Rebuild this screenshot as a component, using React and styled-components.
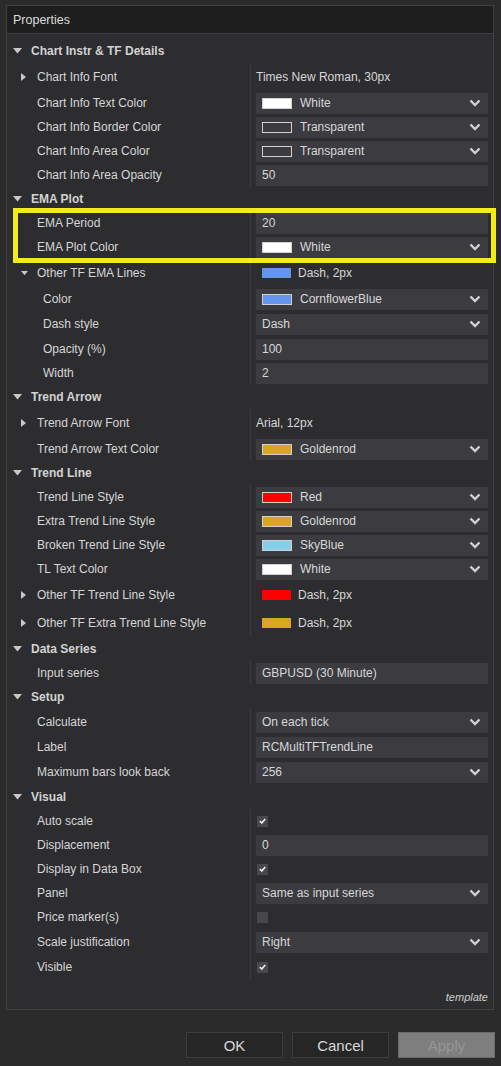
import React from "react";
import styled, { createGlobalStyle } from "styled-components";

const GlobalStyle = createGlobalStyle`
  html, body {
    margin: 0;
    padding: 0;
    background: #2b2b2b;
  }
  body {
    font-family: "Liberation Sans", Arial, sans-serif;
    font-size: 12px;
    color: #d6d6d6;
  }
`;

const Window = styled.div`
  width: 501px;
  height: 1066px;
  box-sizing: border-box;
  padding: 5px 7px 0 6px;
  display: flex;
  flex-direction: column;
`;

const Panel = styled.div`
  height: 1005px;
  box-sizing: border-box;
  border: 1px solid #404043;
  background: #2d2d30;
  display: flex;
  flex-direction: column;
`;

const Header = styled.div`
  height: 27px;
  flex-shrink: 0;
  background: #1e1e1f;
  border-bottom: 1px solid #404043;
  display: flex;
  align-items: center;
  padding-left: 6px;
  font-size: 12.5px;
  color: #dcdcdc;
`;

const List = styled.div`
  padding-top: 5px;
  display: flex;
  flex-direction: column;
`;

const Row = styled.div`
  height: ${(p) => p.h || 24}px;
  display: grid;
  grid-template-columns: 243px 1fr;
  align-items: stretch;
`;

const NameCell = styled.div`
  display: flex;
  align-items: center;
  padding-left: ${(p) => p.indent}px;
  font-weight: ${(p) => (p.category ? 700 : 400)};
  color: ${(p) => (p.category ? "#d2d2d2" : "#d6d6d6")};
  white-space: nowrap;
`;

const Toggle = styled.span`
  width: ${(p) => p.w}px;
  flex-shrink: 0;
  display: flex;
  align-items: center;
`;

const ValueCell = styled.div`
  border-left: ${(p) => (p.category ? "none" : "1px solid #39393c")};
  padding: 0 5px 0 5px;
  display: flex;
  align-items: center;
`;

const Field = styled.div`
  flex: 1;
  height: 21px;
  background: #3c3c40;
  display: flex;
  align-items: center;
  padding: 0 7px 0 6px;
  gap: 8px;
  color: #d8d8d8;
`;

const PlainValue = styled.div`
  flex: 1;
  display: flex;
  align-items: center;
  gap: 7px;
  padding-left: ${(p) => (p.swatch ? 6 : 0)}px;
  color: #d8d8d8;
`;

const Swatch = styled.span`
  width: ${(p) => (p.bare ? 29 : 28)}px;
  height: ${(p) => (p.bare ? 10 : 9)}px;
  flex-shrink: 0;
  background: ${(p) => p.color};
  border: ${(p) => (p.bare ? "none" : "1px solid #d0d0d0")};
`;

const FieldText = styled.span`
  flex: 1;
`;

const Check = styled.span`
  width: 11px;
  height: 11px;
  background: #48484c;
  display: flex;
  align-items: center;
  justify-content: center;
  margin-left: 1px;
`;

const Highlight = styled.div`
  position: relative;
  display: flex;
  flex-direction: column;
  &::after {
    content: "";
    position: absolute;
    left: 6px;
    right: -3px;
    top: -3px;
    bottom: -4px;
    border: 5px solid #f3ec1a;
    pointer-events: none;
  }
`;

const Footer = styled.div`
  height: 31px;
  display: flex;
  align-items: center;
  justify-content: flex-end;
  padding: 6px 5px 0 0;
  box-sizing: border-box;
  font-style: italic;
  font-size: 11px;
  color: #cfcfcf;
`;

const ButtonBar = styled.div`
  display: flex;
  justify-content: flex-end;
  gap: 9px;
  margin-top: 22px;
  margin-right: -1px;
`;

const Button = styled.div`
  width: 97px;
  height: 26px;
  box-sizing: border-box;
  display: flex;
  align-items: center;
  justify-content: center;
  font-size: 15px;
  background: ${(p) => (p.disabled ? "#7e7e7e" : "#262626")};
  color: ${(p) => (p.disabled ? "#969696" : "#d8d8d8")};
  border: 1px solid ${(p) => (p.disabled ? "#6a6a6a" : "#3c3c3c")};
`;

const Down = ({ size = 9 }) => (
  <svg width={size} height={size * 0.6} viewBox="0 0 10 6">
    <polygon points="0,0 10,0 5,6" fill="#c8c8c8" />
  </svg>
);

const Right = () => (
  <svg width="5" height="8" viewBox="0 0 5 8">
    <polygon points="0,0 5,4 0,8" fill="#c8c8c8" />
  </svg>
);

const Chevron = () => (
  <svg width="12" height="8" viewBox="0 0 12 8">
    <polyline points="1.5,1.5 6,6 10.5,1.5" fill="none" stroke="#d0d0d0" strokeWidth="2.4" />
  </svg>
);

const Tick = () => (
  <svg width="7" height="6" viewBox="0 0 7 6">
    <polyline points="0.8,3 2.8,5 6.2,1" fill="none" stroke="#f0f0f0" strokeWidth="1.6" />
  </svg>
);

const Category = ({ label }) => (
  <Row>
    <NameCell category indent={6}>
      <Toggle w={18}>
        <Down />
      </Toggle>
      {label}
    </NameCell>
    <ValueCell category />
  </Row>
);

const renderValue = (v) => {
  if (!v) return null;
  if (v.check !== undefined) return <Check>{v.check && <Tick />}</Check>;
  if (v.plain) {
    return (
      <PlainValue swatch={!!v.color}>
        {v.color && <Swatch bare color={v.color} />}
        {v.plain}
      </PlainValue>
    );
  }
  return (
    <Field>
      {v.color && <Swatch color={v.color} />}
      <FieldText>{v.text}</FieldText>
      {v.select && <Chevron />}
    </Field>
  );
};

const Prop = ({ label, value, h, expand, nested }) => (
  <Row h={h}>
    <NameCell indent={nested ? 20 : 14}>
      <Toggle w={16}>
        {expand === "closed" && <Right />}
        {expand === "open" && <Down size={7} />}
      </Toggle>
      {label}
    </NameCell>
    <ValueCell>{renderValue(value)}</ValueCell>
  </Row>
);

const App = () => {
  return (
    <>
      <GlobalStyle />
      <Window>
        <Panel>
          <Header>Properties</Header>
          <List>
            <Category label="Chart Instr & TF Details" />
            <Prop label="Chart Info Font" h={28} expand="closed" value={{ plain: "Times New Roman, 30px" }} />
            <Prop label="Chart Info Text Color" value={{ color: "#ffffff", text: "White", select: true }} />
            <Prop label="Chart Info Border Color" value={{ color: "transparent", text: "Transparent", select: true }} />
            <Prop label="Chart Info Area Color" value={{ color: "transparent", text: "Transparent", select: true }} />
            <Prop label="Chart Info Area Opacity" value={{ text: "50" }} />

            <Category label="EMA Plot" />
            <Highlight>
              <Prop label="EMA Period" value={{ text: "20" }} />
              <Prop label="EMA Plot Color" value={{ color: "#ffffff", text: "White", select: true }} />
            </Highlight>
            <Prop label="Other TF EMA Lines" h={28} expand="open" value={{ color: "#6495ed", plain: "Dash, 2px" }} />
            <Prop nested label="Color" value={{ color: "#6495ed", text: "CornflowerBlue", select: true }} />
            <Prop nested label="Dash style" h={26} value={{ text: "Dash", select: true }} />
            <Prop nested label="Opacity (%)" value={{ text: "100" }} />
            <Prop nested label="Width" value={{ text: "2" }} />

            <Category label="Trend Arrow" />
            <Prop label="Trend Arrow Font" h={28} expand="closed" value={{ plain: "Arial, 12px" }} />
            <Prop label="Trend Arrow Text Color" value={{ color: "#daa520", text: "Goldenrod", select: true }} />

            <Category label="Trend Line" />
            <Prop label="Trend Line Style" value={{ color: "#ff0000", text: "Red", select: true }} />
            <Prop label="Extra Trend Line Style" value={{ color: "#daa520", text: "Goldenrod", select: true }} />
            <Prop label="Broken Trend Line Style" value={{ color: "#87ceeb", text: "SkyBlue", select: true }} />
            <Prop label="TL Text Color" value={{ color: "#ffffff", text: "White", select: true }} />
            <Prop label="Other TF Trend Line Style" h={28} expand="closed" value={{ color: "#ff0000", plain: "Dash, 2px" }} />
            <Prop label="Other TF Extra Trend Line Style" h={28} expand="closed" value={{ color: "#daa520", plain: "Dash, 2px" }} />

            <Category label="Data Series" />
            <Prop label="Input series" value={{ text: "GBPUSD (30 Minute)" }} />

            <Category label="Setup" />
            <Prop label="Calculate" h={26} value={{ text: "On each tick", select: true }} />
            <Prop label="Label" value={{ text: "RCMultiTFTrendLine" }} />
            <Prop label="Maximum bars look back" h={26} value={{ text: "256", select: true }} />

            <Category label="Visual" />
            <Prop label="Auto scale" value={{ check: true }} />
            <Prop label="Displacement" value={{ text: "0" }} />
            <Prop label="Display in Data Box" value={{ check: true }} />
            <Prop label="Panel" value={{ text: "Same as input series", select: true }} />
            <Prop label="Price marker(s)" value={{ check: false }} />
            <Prop label="Scale justification" h={26} value={{ text: "Right", select: true }} />
            <Prop label="Visible" value={{ check: true }} />
          </List>
          <Footer>template</Footer>
        </Panel>
        <ButtonBar>
          <Button>OK</Button>
          <Button>Cancel</Button>
          <Button disabled>Apply</Button>
        </ButtonBar>
      </Window>
    </>
  );
};

export default App;
